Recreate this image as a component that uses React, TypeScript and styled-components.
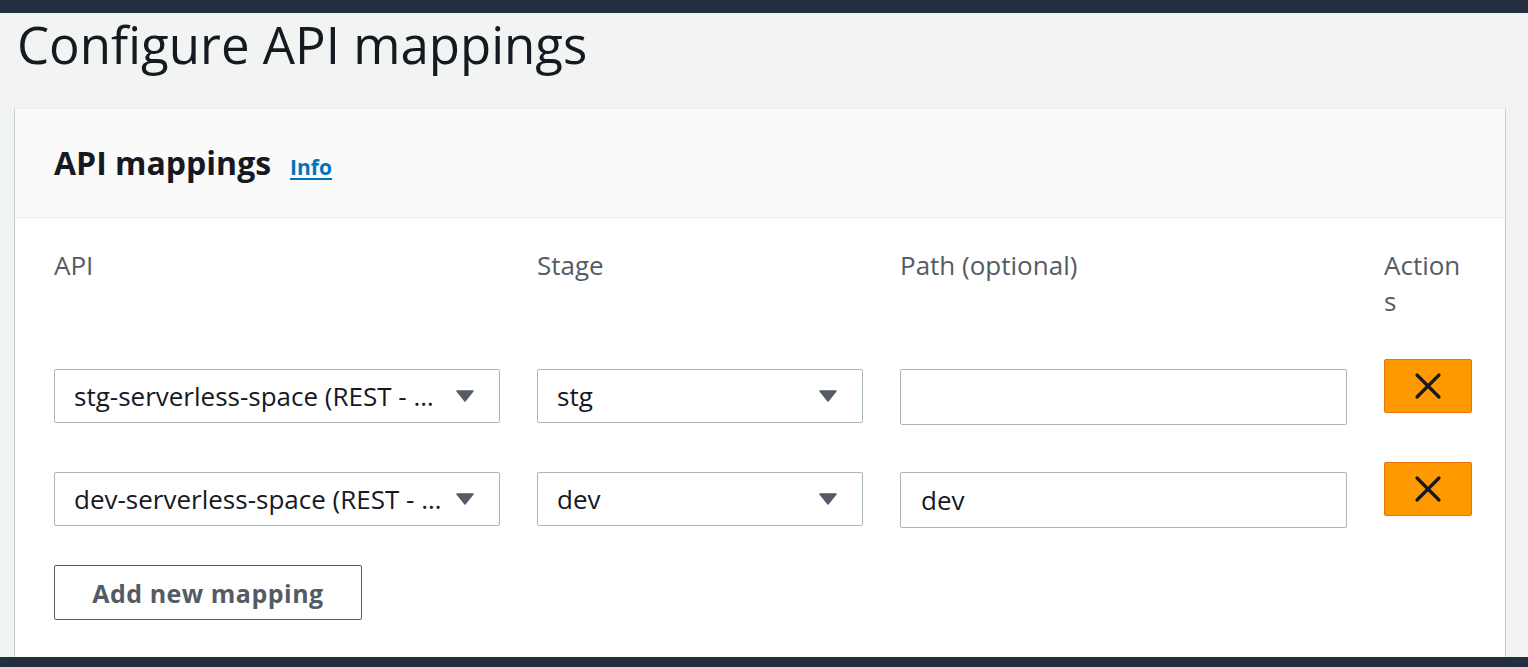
import React from 'react'
import styled, { createGlobalStyle } from 'styled-components'

const GlobalStyle = createGlobalStyle`
  html, body {
    margin: 0;
    padding: 0;
    background: #f2f3f3;
    font-family: "Open Sans", "Noto Sans", sans-serif;
    color: #16191f;
  }
`

const Page = styled.div`
  display: flex;
  flex-direction: column;
  height: 100vh;
  overflow: hidden;
`

const TopBar = styled.div`
  height: 13px;
  flex: none;
  background: #232f3e;
`

const Footer = styled.div`
  height: 10px;
  flex: none;
  background: #232f3e;
  position: relative;
  z-index: 1;
`

const Main = styled.main`
  flex: 1;
  min-height: 0;
  padding: 0 23px 0 15px;
`

const Title = styled.h1`
  margin: 0;
  padding: 0 0 34px 2px;
  line-height: 62px;
  font-size: 51px;
  font-weight: 400;
  color: #16191f;
`

const Card = styled.section`
  background: #fff;
  box-shadow: -1px 0 0 #c8cccc, 1px 0 0 #c8cccc, 0 -1px 0 #eaeded;
  min-height: 600px;
`

const CardHeader = styled.header`
  display: flex;
  align-items: baseline;
  gap: 19px;
  height: 109px;
  box-sizing: border-box;
  padding: 32px 39px 0;
  background: #fafafa;
  border-bottom: 1px solid #eaeded;
`

const CardTitle = styled.h2`
  margin: 0;
  font-size: 32px;
  font-weight: 700;
  color: #16191f;
`

const InfoLink = styled.a`
  font-size: 21px;
  font-weight: 700;
  color: #0073bb;
  text-decoration: underline;
  text-underline-offset: 3px;
  cursor: pointer;
`

const CardBody = styled.div`
  padding: 29px 39px 0;
`

const Grid = styled.div`
  display: grid;
  grid-template-columns: 446px 326px 447px 88px;
  column-gap: 37px;
`

const Label = styled.div`
  font-size: 26px;
  line-height: 36px;
  color: #545b64;
  height: 112px;
  word-break: break-all;
`

const Row = styled(Grid)`
  align-items: start;
  height: 103px;
`

const Cell = styled.div`
  padding-top: 10px;
`

const SelectBox = styled.div`
  display: flex;
  align-items: center;
  height: 54px;
  box-sizing: border-box;
  padding: 0 25px 0 19px;
  border: 1px solid #aab7b8;
  border-radius: 2px;
  background: #fff;
  font-size: 26px;
  color: #16191f;
`

const SelectText = styled.span`
  flex: 1;
  white-space: nowrap;
  overflow: hidden;
`

const Caret = styled.svg`
  flex: none;
  margin-left: 10px;
`

const TextInput = styled.div`
  display: flex;
  align-items: center;
  height: 56px;
  box-sizing: border-box;
  padding: 0 20px;
  border: 1px solid #aab7b8;
  border-radius: 2px;
  background: #fff;
  font-size: 26px;
  color: #16191f;
`

const RemoveButton = styled.button`
  display: flex;
  align-items: center;
  justify-content: center;
  width: 88px;
  height: 54px;
  padding: 0;
  background: #ff9900;
  border: 1px solid #ec7211;
  border-radius: 2px;
  cursor: pointer;
`

const AddButton = styled.button`
  height: 55px;
  width: 308px;
  box-sizing: border-box;
  background: #fff;
  border: 1px solid #545b64;
  border-radius: 2px;
  font-family: inherit;
  font-size: 25px;
  font-weight: 700;
  letter-spacing: 0.5px;
  color: #545b64;
  cursor: pointer;
`

const mappings = [
  { api: 'stg-serverless-space (REST - …', stage: 'stg', path: '' },
  { api: 'dev-serverless-space (REST - …', stage: 'dev', path: 'dev' },
]

const Select = ({ value }: { value: string }) => (
  <SelectBox>
    <SelectText>{value}</SelectText>
    <Caret width="18" height="12" viewBox="0 0 18 12">
      <path d="M1 1 L17 1 L9 11 Z" fill="#545b64" stroke="#545b64" strokeWidth="1.5" strokeLinejoin="round" />
    </Caret>
  </SelectBox>
)

const CloseIcon = () => (
  <svg width="28" height="28" viewBox="0 0 28 28">
    <path d="M3 3 L25 25 M25 3 L3 25" stroke="#16191f" strokeWidth="3.2" strokeLinecap="round" />
  </svg>
)

export default function App() {
  return (
    <Page>
      <GlobalStyle />
      <TopBar />
      <Main>
        <Title>Configure API mappings</Title>
        <Card>
          <CardHeader>
            <CardTitle>API mappings</CardTitle>
            <InfoLink>Info</InfoLink>
          </CardHeader>
          <CardBody>
            <Grid>
              <Label>API</Label>
              <Label>Stage</Label>
              <Label>Path (optional)</Label>
              <Label>Actions</Label>
            </Grid>
            {mappings.map((m) => (
              <Row key={m.stage}>
                <Cell>
                  <Select value={m.api} />
                </Cell>
                <Cell>
                  <Select value={m.stage} />
                </Cell>
                <Cell>
                  <TextInput>{m.path}</TextInput>
                </Cell>
                <RemoveButton aria-label="Remove">
                  <CloseIcon />
                </RemoveButton>
              </Row>
            ))}
            <AddButton>Add new mapping</AddButton>
          </CardBody>
        </Card>
      </Main>
      <Footer />
    </Page>
  )
}
